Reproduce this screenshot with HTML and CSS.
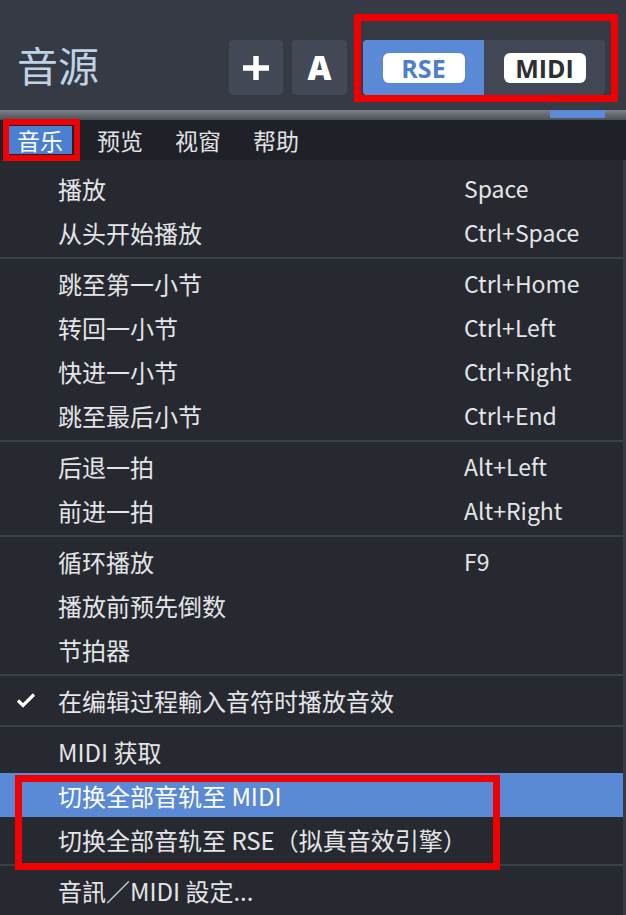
FILE: index.html
```html
<!DOCTYPE html>
<html lang="zh-CN">
<head>
    <meta charset="UTF-8">
    <title>音源</title>
    <link rel="stylesheet" href="styles.css">
</head>
<body>
    <div class="header">
        <div class="title">音源</div>
        <div class="tools">
            <div class="tool-btn">
                <svg width="32" height="32" viewBox="0 0 32 32">
                    <path d="M16 4v24M3 16h26" stroke="#fff" stroke-width="5.5" fill="none"/>
                </svg>
            </div>
            <div class="tool-btn letter">A</div>
            <div class="engine">
                <div class="seg active"><span class="pill">RSE</span></div>
                <div class="seg"><span class="pill">MIDI</span></div>
            </div>
        </div>
    </div>
    <div class="strip">
        <div class="strip-mark"></div>
    </div>

    <div class="menubar">
        <div class="menu-title open">音乐</div>
        <div class="menu-title">预览</div>
        <div class="menu-title">视窗</div>
        <div class="menu-title">帮助</div>
    </div>

    <div class="dropdown">
        <div class="item"><span class="label">播放</span><span class="keys">Space</span></div>
        <div class="item"><span class="label">从头开始播放</span><span class="keys">Ctrl+Space</span></div>
        <div class="sep"></div>
        <div class="item"><span class="label">跳至第一小节</span><span class="keys">Ctrl+Home</span></div>
        <div class="item"><span class="label">转回一小节</span><span class="keys">Ctrl+Left</span></div>
        <div class="item"><span class="label">快进一小节</span><span class="keys">Ctrl+Right</span></div>
        <div class="item"><span class="label">跳至最后小节</span><span class="keys">Ctrl+End</span></div>
        <div class="sep"></div>
        <div class="item"><span class="label">后退一拍</span><span class="keys">Alt+Left</span></div>
        <div class="item"><span class="label">前进一拍</span><span class="keys">Alt+Right</span></div>
        <div class="sep"></div>
        <div class="item"><span class="label">循环播放</span><span class="keys">F9</span></div>
        <div class="item"><span class="label">播放前预先倒数</span></div>
        <div class="item"><span class="label">节拍器</span></div>
        <div class="sep"></div>
        <div class="item">
            <svg class="check" width="20" height="16" viewBox="0 0 20 16">
                <path d="M2 8.5l5 5L18 2.5" stroke="#fff" stroke-width="3.2" fill="none"/>
            </svg>
            <span class="label">在编辑过程輸入音符时播放音效</span>
        </div>
        <div class="sep"></div>
        <div class="item"><span class="label">MIDI 获取</span></div>
        <div class="picked">
            <div class="item hover"><span class="label">切换全部音轨至 MIDI</span></div>
            <div class="item"><span class="label">切换全部音轨至 RSE（拟真音效引擎）</span></div>
        </div>
        <div class="sep"></div>
        <div class="item"><span class="label">音訊／MIDI 設定...</span></div>
    </div>
</body>
</html>
```

FILE: styles.css
```css
body {
    margin: 0;
    width: 626px;
    height: 915px;
    overflow: hidden;
    display: flex;
    flex-direction: column;
    background: #262930;
    font-family: "Noto Sans CJK SC", "Open Sans", sans-serif;
    color: #e4e5e7;
}

/* top panel */
.header {
    height: 110px;
    flex-shrink: 0;
    background: #363a44;
    display: flex;
    align-items: flex-start;
    box-sizing: border-box;
    padding-top: 40px;
}
.title {
    margin-left: 17px;
    margin-top: -4px;
    font-size: 41px;
    line-height: 56px;
    color: #bfd2e6;
    width: 212px;
}
.tools {
    display: flex;
    gap: 9px;
}
.tool-btn {
    width: 54px;
    height: 55px;
    background: #424856;
    border-radius: 4px;
    display: flex;
    align-items: center;
    justify-content: center;
}
.tool-btn.letter {
    width: 55px;
    font-family: "Open Sans", sans-serif;
    font-weight: 800;
    font-size: 33px;
    color: #fff;
}
.engine {
    position: relative;
    display: flex;
    margin-left: 7px;
    height: 55px;
    border-radius: 4px;
    background: #414755;
}
.engine::after {
    content: "";
    position: absolute;
    left: -9px;
    top: -26px;
    right: -13px;
    bottom: -7px;
    border: 7px solid #f00000;
}
.seg {
    width: 121px;
    display: flex;
    align-items: center;
    justify-content: center;
    border-radius: 4px;
}
.seg.active {
    background: #5a8ad6;
    border-radius: 4px 0 0 4px;
}
.pill {
    width: 82px;
    height: 30px;
    background: #fff;
    border-radius: 6px;
    display: flex;
    align-items: center;
    justify-content: center;
    font-family: "Open Sans", sans-serif;
    font-weight: 700;
    font-size: 25px;
    color: #2d2f35;
}
.seg.active .pill {
    color: #4f7fcc;
}

.strip {
    height: 10px;
    flex-shrink: 0;
    background: linear-gradient(#7a7f88, #4b5059);
    display: flex;
    justify-content: flex-end;
    padding-right: 21px;
}
.strip-mark {
    width: 55px;
    height: 8px;
    background: #5b8bd6;
}

/* menu bar */
.menubar {
    height: 40px;
    flex-shrink: 0;
    background: #1f2128;
    display: flex;
    align-items: center;
    padding-left: 2px;
}
.menu-title {
    font-size: 23px;
    line-height: 28px;
    padding: 0 6px;
    margin-right: 20px;
    color: #e2e3e5;
}
.menu-title.open {
    position: relative;
    margin-left: 6px;
    padding: 0 9px;
    background: #4a80d2;
    color: #fff;
    margin-right: 19px;
}
.menu-title.open::after {
    content: "";
    position: absolute;
    left: -5px;
    top: -7px;
    right: -8px;
    bottom: -7px;
    border: 6px solid #f00000;
}

/* dropdown */
.dropdown {
    flex: 1;
    padding-top: 6px;
    border-right: 3px solid #383b44;
}
.item {
    display: grid;
    grid-template-columns: 58px 406px 1fr;
    align-items: center;
    height: 44px;
    font-size: 24px;
}
.label {
    grid-column: 2;
    white-space: nowrap;
}
.keys {
    grid-column: 3;
    font-size: 23px;
}
.check {
    grid-column: 1;
    margin-left: 16px;
}
.sep {
    height: 2px;
    margin: 3px 0 2px;
    background: #3b3f48;
}
.picked {
    position: relative;
}
.picked::after {
    content: "";
    position: absolute;
    left: 15px;
    top: 2px;
    width: 471px;
    bottom: -9px;
    border: 7px solid #f00000;
}
.item.hover {
    background: #5a8ad6;
    color: #fff;
}
```
